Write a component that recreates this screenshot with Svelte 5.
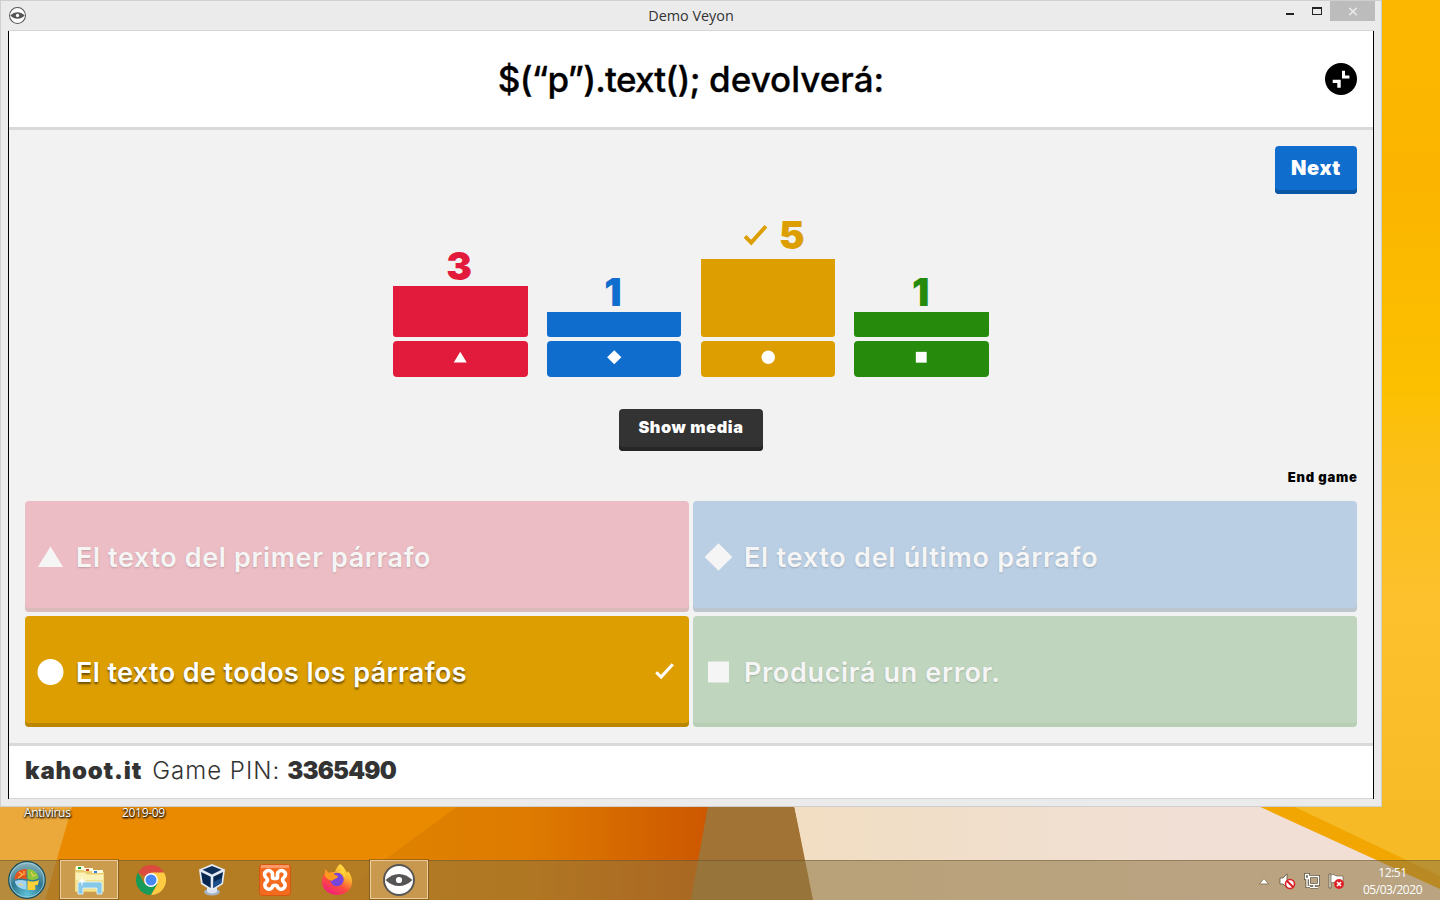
<script>
  const bars = [
    { shape: 'triangle', count: 3, height: 51, color: '#e21b3c' },
    { shape: 'diamond', count: 1, height: 25, color: '#0f6dcd' },
    { shape: 'circle', count: 5, height: 78, color: '#dc9e00', correct: true },
    { shape: 'square', count: 1, height: 25, color: '#268a0c' }
  ];
  const answers = [
    { shape: 'triangle', text: 'El texto del primer párrafo', tone: 'red', ls: 0.62 },
    { shape: 'diamond', text: 'El texto del último párrafo', tone: 'blue', ls: 0.76 },
    { shape: 'circle', text: 'El texto de todos los párrafos', tone: 'gold', correct: true, ls: 0.39 },
    { shape: 'square', text: 'Producirá un error.', tone: 'green', ls: 0.66 }
  ];
</script>

{#snippet shape(kind)}
  <svg class="shape" viewBox="0 0 32 32" fill="currentColor">
    {#if kind === 'triangle'}
      <path d="M16 5.500 28.600 26H3.400z" />
    {:else if kind === 'diamond'}
      <path d="M16 2.200 29.800 16 16 29.800 2.200 16z" />
    {:else if kind === 'circle'}
      <circle cx="16" cy="16" r="13" />
    {:else}
      <path d="M5.500 5.500h21v21h-21z" />
    {/if}
  </svg>
{/snippet}

{#snippet check(size)}
  <svg width={size} height={size} viewBox="0 0 32 32" fill="none" stroke="currentColor" stroke-width="4.300">
    <path d="M4.500 17 11.300 23.800 27.500 5.800" />
  </svg>
{/snippet}

{#snippet eye(size)}
  <svg width={size} height={size} viewBox="0 0 32 32">
    <circle cx="16" cy="16" r="15" fill="#fff" stroke="#555" stroke-width="1.900" />
    <path d="M2.500 16C7 12 11 10 16 10s9 2 13.500 6C25 20 21 22 16 22S7 20 2.500 16z" fill="#555" />
    <circle cx="16" cy="16" r="3.100" fill="#fff" />
  </svg>
{/snippet}

<div class="desktop">
  <svg class="wallpaper" viewBox="0 0 1440 900" aria-hidden="true">
    <defs>
      <linearGradient id="side" x1="0" y1="0" x2="0" y2="1">
        <stop offset="0" stop-color="#fcb800" />
        <stop offset=".2" stop-color="#fbb500" />
        <stop offset=".43" stop-color="#fcc000" />
        <stop offset=".5" stop-color="#fbbf16" />
        <stop offset=".67" stop-color="#fcc12d" />
        <stop offset="1" stop-color="#f5b924" />
      </linearGradient>
      <linearGradient id="orange" gradientUnits="userSpaceOnUse" x1="380" y1="0" x2="708" y2="0">
        <stop offset="0" stop-color="#df8200" />
        <stop offset=".45" stop-color="#de7b00" />
        <stop offset="1" stop-color="#cd5700" />
      </linearGradient>
      <linearGradient id="cream" gradientUnits="userSpaceOnUse" x1="794" y1="0" x2="1200" y2="0">
        <stop offset="0" stop-color="#f1dec2" />
        <stop offset="1" stop-color="#f1dfd6" />
      </linearGradient>
    </defs>
    <rect x="1380" width="60" height="900" fill="url(#side)" />
    <path d="M0 800h720v100H0z" fill="#e98a00" />
    <path d="M0 800h74L45 900H0z" fill="#eca93b" />
    <path d="M466 800 330 900h365l15-100z" fill="url(#orange)" />
    <path d="M709 800 691 900h124l-22-100z" fill="#a17435" />
    <path d="M793 800 813 900h627V800z" fill="url(#cream)" />
    <path d="M1245 800 1440 889V800z" fill="#f2a602" />
    <path d="M1280 800 1440 876V800z" fill="#f5ba26" />
  </svg>

  <span class="shortcut first">Antivirus</span>
  <span class="shortcut second">2019-09</span>

  <section class="window">
    <header class="titlebar">
      <span class="appicon">{@render eye(17)}</span>
      <span class="caption">Demo Veyon</span>
      <div class="controls">
        <svg width="55" height="20" viewBox="0 0 55 20">
          <path d="M11 12h8v2h-8z" fill="#222" />
          <path d="M37 6h10v8H37zM38 8v5h8V8z" fill="#222" fill-rule="evenodd" />
        </svg>
        <span class="close"><svg width="10" height="9" viewBox="0 0 10 9" stroke="#e6e6e6" stroke-width="1.700"><path d="M1.300.8l7.400 7.400M8.700.8 1.300 8.200" /></svg></span>
      </div>
    </header>

    <div class="client">
      <div class="question">
        <h1><span class="code-part">$(“p”).text();</span> devolverá:</h1>
        <svg class="shrink" width="32" height="32" viewBox="0 0 32 32">
          <circle cx="16" cy="16" r="16" fill="#000" />
          <path d="M17 7.700h3v4.700h4.400v3.200H17zM7.700 16.700h8v8h-3.400v-4.800H7.700z" fill="#fff" />
        </svg>
      </div>

      <main>
        <div class="toprow"><button class="next">Next</button></div>
        <div class="chart">
          {#each bars as bar}
            <div class="col" style="color: {bar.color}">
              <div class="count" class:correct={bar.correct}>
                {#if bar.correct}{@render check(29)}{/if}
                <span>{bar.count}</span>
              </div>
              <div class="bar" style="height: {bar.height}px"></div>
              <div class="key"><i>{@render shape(bar.shape)}</i></div>
            </div>
          {/each}
        </div>
        <button class="media">Show media</button>
        <div class="end">End game</div>
        <div class="answers">
          {#each answers as a}
            <div class="answer {a.tone}" class:faded={!a.correct}>
              {@render shape(a.shape)}
              <span class="text" style="letter-spacing: {a.ls}px">{a.text}</span>
              {#if a.correct}{@render check(23)}{/if}
            </div>
          {/each}
        </div>
      </main>

      <footer>
        <b class="site">kahoot.it</b>
        <span class="pin">Game PIN:</span>
        <b class="code">3365490</b>
      </footer>
    </div>
  </section>

  <nav class="taskbar">
    <div class="task start">
      <svg width="40" height="40" viewBox="0 0 40 40">
        <defs>
          <radialGradient id="orb" cx=".5" cy=".9" r=".9">
            <stop offset="0" stop-color="#5fc3d8" />
            <stop offset=".5" stop-color="#2d7790" />
            <stop offset="1" stop-color="#8fb7bf" />
          </radialGradient>
        </defs>
        <circle cx="20" cy="20" r="18.300" fill="url(#orb)" stroke="#174b5c" stroke-width="1.200" />
        <circle cx="20" cy="20" r="17" fill="none" stroke="#a6d6df" stroke-width=".8" />
        <path d="M19.500 9v10.500c-4-1.500-8-1.500-12 0C7.500 13 12 9 19.500 9z" fill="#e5541b" />
        <path d="M20.500 9C27 9 31 13 31.500 18c-4 2.500-7 2.500-11 1z" fill="#8cc63c" />
        <path d="M8 21c4-1.500 7.500-1.500 11.500 0v8.500C13 29 8 26 8 21z" fill="#9fd4f2" />
        <path d="M20.500 20.500c4 1.500 10 1.500 17-.5L36 25h-4v5H20.500z" transform="translate(6.800) scale(.67 1)" fill="#fcd037" />
        <path d="M12 12l4 3M11 18l4-3M24 12l2 4 3-1M12 24l4 1M17 11v4" stroke="#ffcf5a" stroke-width="1.300" fill="none" opacity=".8" />
      </svg>
    </div>
    <div class="task framed">
      <svg width="34" height="34" viewBox="0 0 34 34">
        <path d="M3 4h9l2 3h9l2 2h7v20H3z" fill="#e8ce72" />
        <path d="M4 3h8v4H4z" fill="#fffbe0" /><path d="M6 4h3v2H6z" fill="#12a82b" />
        <path d="M12 5h9v3h-9z" fill="#fffbe0" /><path d="M14 6h3v2h-3z" fill="#d6402b" />
        <path d="M20 7h11v3H20z" fill="#fffbe0" /><path d="M22 8h3v2h-3z" fill="#2b7fe0" />
        <path d="M3 9h10l2 2h17v17H3z" fill="#f5e18c" /><path d="M4 10h9l2 2h16v5H4z" fill="#fbf2b9" />
        <path d="M6 31V21q0-2 2-2h20q2 0 2 2v10h-5v-6H11v6z" fill="#86c8e8" stroke="#d3effa" />
        <path d="M10 13l.8 4 4.200 1-4.200 1-.8 5-.8-5-4.200-1 4.200-1z" fill="#fff" />
      </svg>
    </div>
    <div class="task">
      <svg width="30" height="30" viewBox="0 0 30 30">
        <path d="M15 15 2 7.500A15 15 0 0 1 28 7.500z" fill="#dc4b3e" />
        <path d="M2 7.500A15 15 0 0 0 15 30l6.500-11.200L15 15 8.500 18.800z" fill="#189a58" />
        <path d="M28 7.500A15 15 0 0 1 15 30l6.500-11.200L15 7.500z" fill="#fecb43" />
        <circle cx="15" cy="15" r="6.900" fill="#fff" /><circle cx="15" cy="15" r="5.500" fill="#4788f4" />
      </svg>
    </div>
    <div class="task vbox">
      <svg width="30" height="34" viewBox="0 0 30 34">
        <ellipse cx="15" cy="29" rx="8" ry="3.500" fill="#a5b1c4" />
        <path d="M10 22h10v7q-5 3-10 0z" fill="#dce4ef" />
        <path d="M15 1 28 6.500 26 21 15 28 4 21 2 6.500z" fill="#e3eaf3" />
        <path d="M15 3 24.500 6.800 15 11.500 5.500 6.800z" fill="#102e5a" />
        <path d="M4 9 13.700 13.800V25L5.700 20zM26 9 16.300 13.800V25l8-5z" fill="#082750" />
        <path d="M16.300 19l8.400-4-.4 5-8 5z" fill="#1c4f8c" />
      </svg>
    </div>
    <div class="task">
      <svg width="32" height="32" viewBox="0 0 32 32">
        <rect x=".5" y=".5" width="31" height="31" rx="3" fill="#f26b1f" stroke="#d4570f" />
        <path d="M2 1h28v3H2z" fill="#fa9a66" />
        <path d="M13.500 14V10.500A4 4 0 1 0 7.500 14q2 2 0 4A4 4 0 1 0 13.800 22q2.200-1.500 4.400 0A4 4 0 1 0 24.500 18q-2-2 0-4A4 4 0 1 0 18.500 10.500V14q-2.500 1-5 0" fill="none" stroke="#fff" stroke-width="3.600" stroke-linecap="round" stroke-linejoin="round" />
      </svg>
    </div>
    <div class="task">
      <svg width="32" height="32" viewBox="0 0 32 32">
        <defs>
          <linearGradient id="fox" x1=".85" y1="0" x2=".3" y2="1">
            <stop offset="0" stop-color="#fff04a" /><stop offset=".35" stop-color="#ffb52e" />
            <stop offset=".65" stop-color="#ff4f3c" /><stop offset="1" stop-color="#ef1e7c" />
          </linearGradient>
        </defs>
        <path d="M19 0c4 3 5 5 7 9l1-2c3 4 4 7 4 11 0 8-7 13-15 13S1 25 1 18c0-4 1-7 3-9V5l4 4c2-1 4-1 6-1 1-4 3-6 5-8z" fill="url(#fox)" />
        <circle cx="16" cy="15.500" r="6.700" fill="#7545dc" />
        <path d="M4 6l4 3c3-1 5 0 6 2 2 0 3 1 3 2-2 2-4 2-6 4-1-1-5-1-7-5z" fill="#ff981f" />
        <path d="M18 8c3 0 5 2 5 6 2-3 1-6-2-8z" fill="#ffd83a" />
      </svg>
    </div>
    <div class="task framed">{@render eye(32)}</div>

    <div class="tray">
      <svg width="10" height="7" viewBox="0 0 10 7"><path d="M5 .3 9.500 6H.5z" fill="#fff" stroke="#6d613f" stroke-width=".7" /></svg>
      <svg width="17" height="17" viewBox="0 0 17 17">
        <path d="M1 5h3l4-4.200v14L4 11H1z" fill="#fff" stroke="#5b5138" stroke-width=".8" />
        <circle cx="11" cy="11" r="4.500" fill="#fff" stroke="#de1f27" stroke-width="1.600" /><path d="M7.800 7.800l6.500 6.500" stroke="#de1f27" stroke-width="2" />
      </svg>
      <svg width="17" height="17" viewBox="0 0 17 17">
        <g fill="none" stroke="#5b5138" stroke-width="3"><path d="M5.500 3.500h9v8h-9zM10 11.500v3M6 14.500h8M1.500 1.500h3v4h-3zM3 5.500v8h3" /></g>
        <g fill="none" stroke="#fff" stroke-width="1.400"><path d="M5.500 3.500h9v8h-9zM10 11.500v3M6 14.500h8M1.500 1.500h3v4h-3zM3 5.500v8h3" /></g>
      </svg>
      <svg width="17" height="17" viewBox="0 0 17 17">
        <path d="M1 1h2v14H1z" fill="#fff" stroke="#5b5138" stroke-width=".8" />
        <path d="M3 2c3-1.500 4 1 6 1h6v7c-6 1-7-2-12 0z" fill="#fff" stroke="#5b5138" stroke-width=".6" />
        <circle cx="11" cy="11" r="4.900" fill="#de1f27" /><path d="M9 9l4 4M13 9l-4 4" stroke="#fff" stroke-width="1.700" />
      </svg>
    </div>
    <div class="clock"><span>12:51</span><span>05/03/2020</span></div>
  </nav>
</div>

<style>
  :global(body) { margin: 0; overflow: hidden; }
  .desktop { position: relative; width: 1440px; height: 900px; overflow: hidden; display: flex; flex-direction: column; justify-content: space-between; font-family: Inter, sans-serif; }
  .desktop * { box-sizing: border-box; }
  .wallpaper { position: absolute; inset: 0; width: 1440px; height: 900px; }
  .shortcut { position: absolute; top: 805px; font: 12px/16px "Open Sans", sans-serif; color: #fff; text-shadow: 1px 1px 2px #000, 0 1px 2px #000; letter-spacing: -.3px; }
  .first { left: 24px; }
  .second { left: 122px; }

  .window { position: relative; width: 1382px; height: 807px; background: #ebebeb; border: 1px solid #cfcfcf; display: flex; flex-direction: column; padding: 0 7px 7px; }
  .titlebar { height: 30px; flex: none; display: grid; grid-template-columns: 140px 1fr 140px; align-items: start; border-bottom: 1px solid #d6d6d6; }
  .appicon { display: flex; padding: 5.500px 0 0 1.400px; }
  .caption { text-align: center; font: 14.400px/30px "Open Sans", sans-serif; color: #333; }
  .controls { display: flex; justify-content: flex-end; }
  .close { width: 45px; height: 20px; background: #bcbcbc; display: flex; align-items: center; justify-content: center; margin-right: -1px; }
  .controls svg { display: block; }

  .client { flex: 1; display: flex; flex-direction: column; background: #f2f2f2; border: solid #000; border-width: 0 1px; min-height: 0; }
  .question { height: 99px; flex: none; background: #fff; border-bottom: 3px solid #d9d9d9; display: grid; grid-template-columns: 48px 1fr 48px; align-items: center; }
  h1 { grid-column: 2; margin: 0; text-align: center; font-size: 35px; line-height: 48px; font-weight: 500; color: #000; -webkit-text-stroke: .3px #000; }
  .code-part { letter-spacing: -.8px; }
  .shrink { display: block; }

  main { flex: 1; display: flex; flex-direction: column; padding: 16px 16px 0; align-items: stretch; min-height: 0; }
  .toprow { display: flex; justify-content: flex-end; }
  button { border: 0; padding: 0 0 4px; color: #fff; font-family: Inter, sans-serif; border-radius: 4px; }
  .next { width: 82px; height: 48px; background: #0f6dcd; box-shadow: inset 0 -4px #0c57a4; font-size: 20px; font-weight: 900; letter-spacing: .6px; }
  .chart { height: 183px; display: flex; gap: 19.330px; width: 596px; align-self: center; align-items: flex-end; }
  .col { flex: 1; }
  .count { display: flex; justify-content: center; align-items: center; gap: 10px; height: 40px; padding-right: 2px; font-size: 38.500px; font-weight: 900; line-height: 40px; }
  .correct { height: 44px; padding: 0 0 4px 10px; gap: 9px; }
  .bar { background: currentColor; border-radius: 0 0 3px 3px; }
  .key { margin-top: 4px; height: 36px; background: currentColor; border-radius: 4px; display: flex; justify-content: center; padding-top: 7.700px; }
  .key i { color: #fff; width: 16.500px; height: 16.500px; }
  .shape { display: block; width: 100%; height: 100%; }
  .media { margin-top: 32px; align-self: center; width: 144px; height: 42px; padding-bottom: 6px; background: #333; box-shadow: inset 0 -4px #262626; font-size: 16.300px; font-weight: 900; letter-spacing: .6px; }
  .end { margin-top: 18px; height: 18px; text-align: right; font-size: 13px; line-height: 17px; font-weight: 900; color: #000; letter-spacing: .8px; margin-right: -.8px; }
  .answers { margin-top: 14px; display: grid; grid-template-columns: 1fr 1fr; grid-auto-rows: 111px; gap: 4px; }
  .answer { display: flex; align-items: center; border-radius: 4px; padding: 0 13px 0 9px; color: #fff; box-shadow: inset 0 -4px rgba(0, 0, 0, .15); }
  .answer .shape { width: 33px; height: 32px; flex: none; }
  .text { flex: 1; margin: 2px 0 0 9px; font-size: 27px; font-weight: 600; line-height: 36px; text-shadow: 0 2px 2px rgba(0, 0, 0, .5); white-space: nowrap; }
  .red { background: #ecbdc4; }
  .blue { background: #bbcfe4; }
  .gold { background: #dc9e00; }
  .green { background: #bfd5be; }
  .faded { color: #f5f5f5; box-shadow: inset 0 -4px rgba(190, 185, 175, .4); }
  .green.faded { box-shadow: inset 0 -4px rgba(170, 195, 165, .3); }
  .faded .text { text-shadow: 0 1px 2px rgba(0, 0, 0, .18); }

  footer { height: 56px; flex: none; background: #fff; border-top: 3px solid #d9d9d9; display: flex; align-items: center; padding: 0 16px 2px; color: #333; font-size: 24px; line-height: 32px; border-bottom: 1px solid #d6d6d6; white-space: nowrap; }
  .site, .code { font-weight: 900; }
  .site { letter-spacing: .83px; }
  .pin { margin: 0 7px 0 10px; font-weight: 300; letter-spacing: 1px; }
  .code { letter-spacing: -.8px; }

  .taskbar { position: relative; height: 40px; display: flex; background: rgba(140, 116, 62, .56); box-shadow: inset 0 1px rgba(80, 65, 30, .35); }
  .task { width: 60px; margin-right: 2px; display: flex; align-items: center; justify-content: center; }
  .start { width: 54px; margin-right: 5px; }
  .vbox { padding-right: 3px; }
  .framed { height: 39px; margin: 0 3px 0 1px; width: 58px; background: rgba(255, 225, 180, .3); border: 1px solid rgba(255, 235, 200, .65); outline: 1px solid rgba(80, 55, 20, .4); }
  .tray { margin-left: auto; display: flex; align-items: center; gap: 7.500px; padding-top: 2px; }
  .tray svg:first-child { margin-right: 3px; }
  .clock { width: 95px; display: flex; flex-direction: column; align-items: center; padding: 4px 0 0; font: 12px/17px "Open Sans", sans-serif; letter-spacing: -.45px; color: #fff; }
</style>
